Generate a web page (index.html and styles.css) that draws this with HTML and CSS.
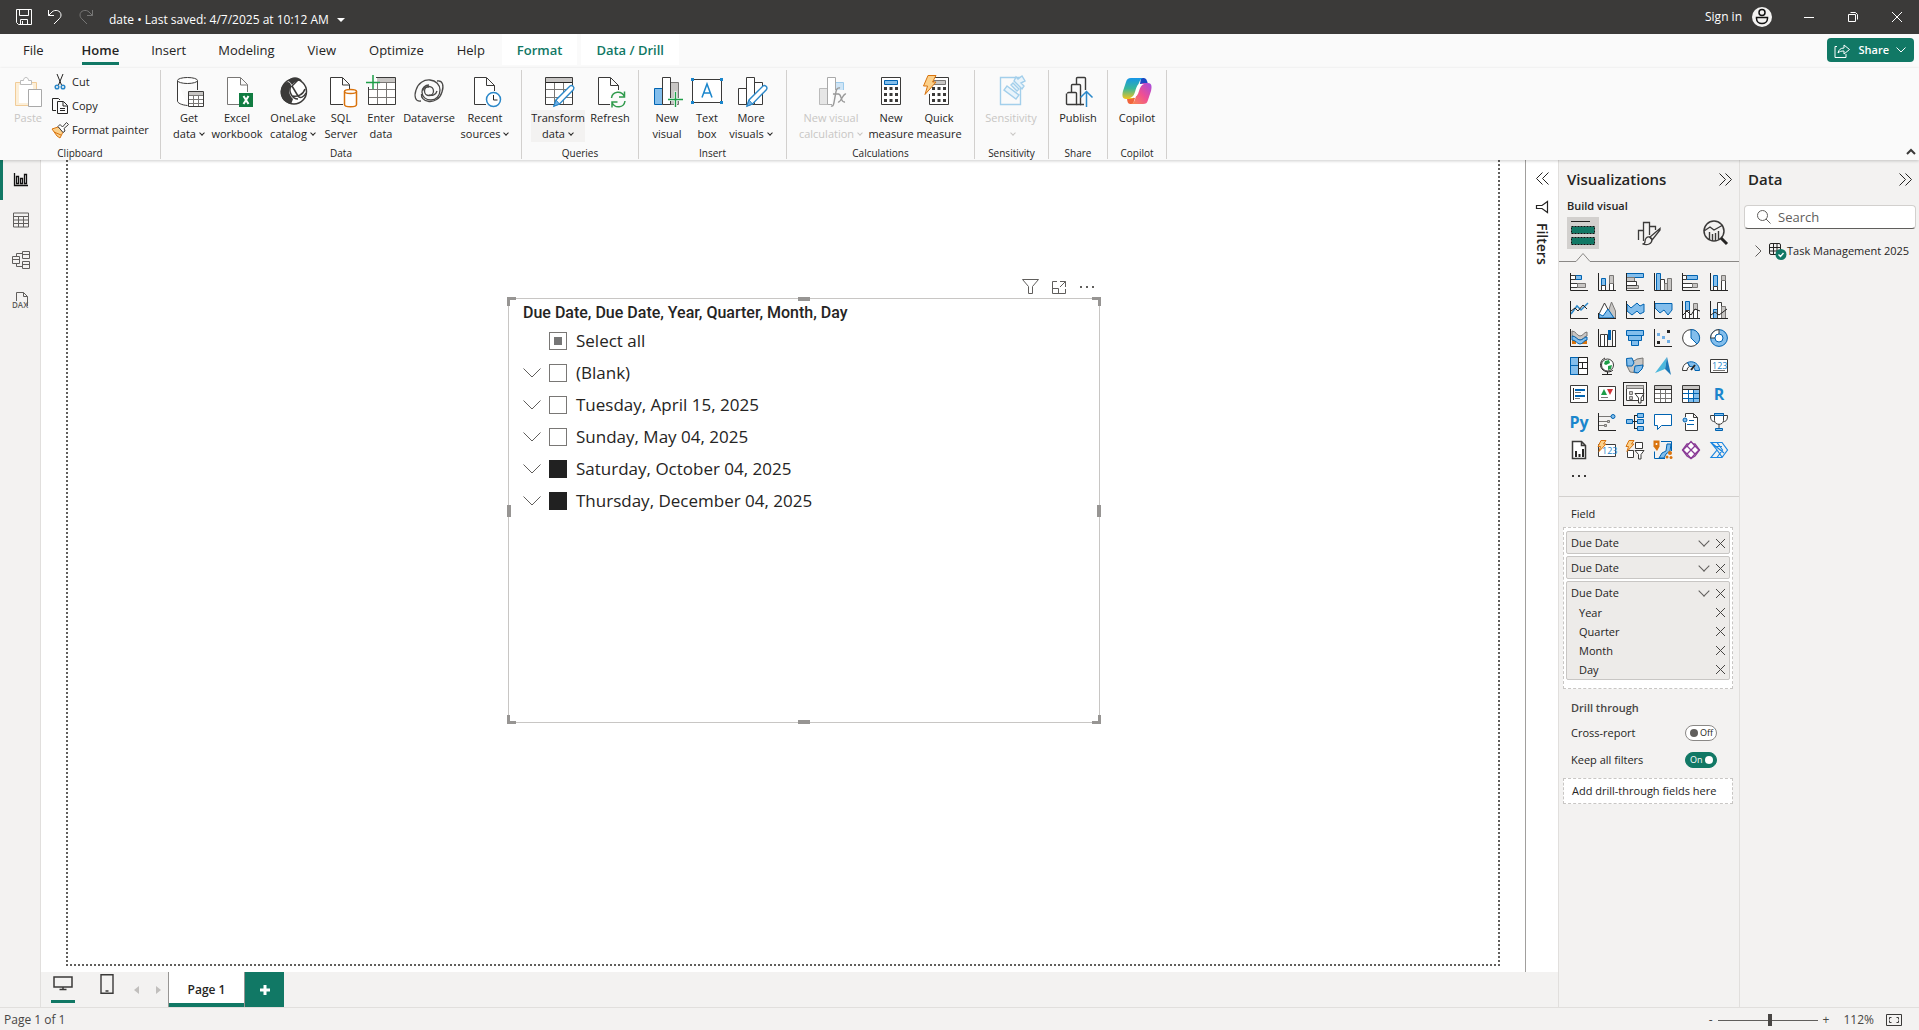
FILE: index.html
```html
<!DOCTYPE html>
<html lang="en">
<head>
    <meta charset="UTF-8">
    <meta name="viewport" content="width=device-width, initial-scale=1.0">
    <title>date - Power BI Desktop</title>
    <link rel="stylesheet" href="styles.css">
</head>
<body>

    <header class="titlebar">
        <button class="tb-btn" aria-label="Save"><svg width="16" height="16" viewBox="0 0 16 16"><path class="lw" d="M.5.5h15v15h-13l-2-2zM3.500.5v6h9v-6M4.500 15.500v-5h7v5M6.500 12v3"/></svg></button>
        <button class="tb-btn" aria-label="Undo"><svg width="16" height="16" viewBox="0 0 16 16"><path class="lw" d="M1.500 1v5.500H7M1.500 6.500L5 3c3-3 9-1.500 9 3 0 2-1 3-2 4l-5 5"/></svg></button>
        <button class="tb-btn dim" aria-label="Redo"><svg width="16" height="16" viewBox="0 0 16 16"><path class="lw" d="M14.500 1v5.500H9M14.500 6.500L11 3C8 0 2 1.500 2 6c0 2 1 3 2 4l5 5"/></svg></button>
        <button class="file-name">date • Last saved: 4/7/2025 at 10:12 AM <svg width="8" height="4" viewBox="0 0 8 4"><path fill="#fff" d="M0 0h8L4 4z"/></svg></button>
        <div class="window-side">
            <button class="sign-in">Sign in
                <svg width="20" height="20" viewBox="0 0 20 20"><circle cx="10" cy="10" r="10" fill="#f3f2f1"/><circle cx="10" cy="5.500" r="3" fill="none" stroke="#111" stroke-width="1.500"/><path d="M4.500 10.500h11v1c0 3-2.500 5-5.500 5s-5.500-2-5.500-5z" fill="none" stroke="#111" stroke-width="1.500"/></svg>
            </button>
            <button class="win-btn" aria-label="Minimize"><svg width="12" height="12" viewBox="0 0 12 12"><path class="lw" d="M1 6.500h10"/></svg></button>
            <button class="win-btn" aria-label="Restore"><svg width="12" height="12" viewBox="0 0 12 12"><path class="lw" d="M1.500 3.500h7v7h-7zM3.500 1.500h5l2 2v5"/></svg></button>
            <button class="win-btn" aria-label="Close"><svg width="12" height="12" viewBox="0 0 12 12"><path class="lw" d="M1 1l10 10M11 1L1 11"/></svg></button>
        </div>
    </header>

    <nav class="tabs">
        <a href="#" class="tab tab-file">File</a>
        <a href="#" class="tab active">Home</a>
        <a href="#" class="tab">Insert</a>
        <a href="#" class="tab">Modeling</a>
        <a href="#" class="tab">View</a>
        <a href="#" class="tab">Optimize</a>
        <a href="#" class="tab">Help</a>
        <a href="#" class="tab context">Format</a>
        <a href="#" class="tab context">Data / Drill</a>
        <button class="share"><svg width="17" height="15" viewBox="0 0 17 15"><path class="lw" d="M3 3.500H1v11h11V11M4 10c.5-3 2.500-5 6-5V2l5.500 4.500L10 11V8c-3 0-4.500.5-6 2z"/></svg>Share<svg width="10" height="6" viewBox="0 0 10 6"><path class="lw" d="M.5.5L5 5 9.500.5"/></svg></button>
    </nav>

    <section class="ribbon">
        <div class="group g-clip">
            <div class="tools">
                <button class="big disabled s">
                    <svg width="32" height="32" viewBox="0 0 32 32"><path d="M3.500 6.500h21v23h-21z" fill="#fcefd9" stroke="#f1cc98"/><path d="M7 9h14v18H7z" fill="#fff"/><path d="M8.500 8.500v-4h3c0-4 5-4 5 0h3v4z" fill="#fff" stroke="#bbb"/><path d="M16.500 13.500h13v17h-13z" fill="#fff" stroke="#a9a9a9"/></svg>
                    <span>Paste</span>
                </button>
                <div class="small-list">
                    <button class="small"><svg width="18" height="16" viewBox="0 0 18 16"><path class="lk" d="M6 0l4.500 11M12 0L7.500 11"/><circle class="lb" cx="6" cy="13" r="1.800"/><circle class="lb" cx="12" cy="13" r="1.800"/></svg>Cut</button>
                    <button class="small"><svg width="18" height="16" viewBox="0 0 18 16"><path class="lk" d="M5 12.500H1.500V.5h6L9 2M6.500 3.500h6l4 4v8h-10zM12 4v4h4M9 10.500h5M9 12.500h5"/></svg>Copy</button>
                    <button class="small"><svg width="18" height="16" viewBox="0 0 18 16"><path d="M1 7l6-2 5 5-3 6-3-2z" fill="#fbd08a" stroke="#d9730d"/><path d="M3 10l7 3" stroke="#d9730d"/><path d="M7 4.500l2-2 2.500 2.500L15.500.5l2 2L13 6.500 14 9l-2 1.500z" fill="#fff" stroke="#3b3a39"/></svg>Format painter</button>
                </div>
            </div>
            <div class="caption">Clipboard</div>
        </div>

        <div class="group g-data">
            <div class="tools">
                <button class="big s">
                    <svg width="32" height="32" viewBox="0 0 32 32"><path class="fk" d="M4.500 5v20c0 2 4 4 10 4.500M24.500 5v9"/><ellipse class="fk" cx="14.500" cy="4.500" rx="10" ry="3"/><path class="fk" d="M15.500 15.500h15v15h-15z"/><path d="M16 16h14v3H16z" fill="#c8c6c4"/><path class="lg" d="M16 19.500h14M16 23.500h14M16 27.500h14M20.500 19v11M25.500 19v11"/></svg>
                    <span>Get<br>data<i class="arr"></i></span>
                </button>
                <button class="big m">
                    <svg width="32" height="32" viewBox="0 0 32 32"><path d="M18 28.500H6.500v-27h13l7 7V16M19.500 2v7h7" fill="#fff" stroke="#797775"/><path d="M18 17h14v14H18z" fill="#107c41"/><path d="M22.500 20l5 8M27.500 20l-5 8" stroke="#fff" stroke-width="2"/></svg>
                    <span>Excel<br>workbook</span>
                </button>
                <button class="big m">
                    <svg width="32" height="32" viewBox="0 0 32 32"><circle cx="17" cy="15.500" r="12.500" fill="#fff" stroke="#3b3a39" stroke-width="1.500"/><path d="M11 5c3-5 11-5 14 0-4-1-8 1-10 4-1-2-2-3-4-4z" fill="#3b3a39"/><path d="M10 6c3 0 4 2 4 4-3 4-2 9 2 13-1 3-2 5-2 5C6 27 2 19 4 13c1-3 3-6 6-7z" fill="#3b3a39"/><path d="M14 10c-3 5 1 13 7 13M21 4l-6 6 6 10c2 3 6 1 8-3M16 20c4 1 10-1 12-7" fill="none" stroke="#3b3a39" stroke-width="1.500"/></svg>
                    <span>OneLake<br>catalog<i class="arr"></i></span>
                </button>
                <button class="big s">
                    <svg width="32" height="32" viewBox="0 0 32 32"><path class="fk" d="M18 28.500H5.500v-27h12l7 7V13M17.500 2v7h7"/><path d="M19.500 15.500v13c0 3 12 3 12 0v-13" fill="#fff" stroke="#d9730d" stroke-width="1.500"/><ellipse cx="25.500" cy="15.500" rx="6" ry="2" fill="#fff" stroke="#d9730d" stroke-width="1.500"/></svg>
                    <span>SQL<br>Server</span>
                </button>
                <button class="big s">
                    <svg width="32" height="32" viewBox="0 0 32 32"><path class="fk" d="M3.500 1.500h27v27h-27z"/><path d="M12 2h18v4H12z" fill="#c8c6c4"/><path class="lg" d="M4 13.500h26M4 21.500h26M12.500 6v22M21.500 6v22M12 6.500h18"/><path d="M0 0h11v11H0z" fill="#fafafa"/><path d="M8 -1v14M1 6.500h14" stroke="#1e9e48" stroke-width="1.500"/></svg>
                    <span>Enter<br>data</span>
                </button>
                <button class="big m">
                    <svg width="32" height="32" viewBox="0 0 32 32"><g fill="none" stroke="#4a4948" stroke-width="1.300"><circle cx="16" cy="15" r="4.500"/><path d="M8 25C2 26 1 20 3 14 5 7 11 3.500 17 4c6 .5 10 5 10 10 0 6-4 10-9 10-5 0-9-3-9-8 0-4 3-7 7-7"/><path d="M24 5c6-1 7 5 5 11-2 7-8 10-13 9.500C10 25 8 21 8.500 18"/><path d="M16 19c3 1 7 0 8-4M16 11c-4-1-6 2-6.500 4"/></g></svg>
                    <span>Dataverse</span>
                </button>
                <button class="big m">
                    <svg width="32" height="32" viewBox="0 0 32 32"><path class="fk" d="M17 28.500H5.500v-27h12l8 8V15M17.500 2v7.500h8"/><circle cx="24.500" cy="23.500" r="7" fill="#fff" stroke="#2b88c9" stroke-width="1.500"/><path class="lk" d="M24.500 19v5h4"/></svg>
                    <span>Recent<br>sources<i class="arr"></i></span>
                </button>
            </div>
            <div class="caption">Data</div>
        </div>

        <div class="group g-queries">
            <div class="tools">
                <button class="big m hovered">
                    <svg width="32" height="32" viewBox="0 0 32 32"><path class="fk" d="M3.500 1.500h27v27h-27z"/><path d="M4 2h26v4H4z" fill="#c8c6c4"/><path class="lg" d="M4 13.500h26M4 21.500h26M12.500 6v22M21.500 6v22"/><path class="lk" d="M4 6.500h26"/><path d="M12 30l2-6 14-14c2-1.500 5 1 3.500 3.500L17.500 28z" fill="#fff" stroke="#2b88c9" stroke-width="1.400"/><path d="M12 30l2-6 3.500 4z" fill="#71afe5" stroke="#2b88c9"/></svg>
                    <span>Transform<br>data<i class="arr"></i></span>
                </button>
                <button class="big n">
                    <svg width="32" height="32" viewBox="0 0 32 32"><path class="fk" d="M16 28.500H4.500v-27h12l8 8V14M16.500 2v7.500h8"/><path d="M17 16h15v15H17z" fill="#fafafa"/><path d="M17.500 22c1-7 10-8 13-1.500M30.500 15.500v5.500H25M31 25c-1 7-10 8-13 1.500M18 31.500V26h5.500" fill="none" stroke="#2f9a4b" stroke-width="1.500"/></svg>
                    <span>Refresh</span>
                </button>
            </div>
            <div class="caption">Queries</div>
        </div>

        <div class="group g-insert">
            <div class="tools">
                <button class="big s">
                    <svg width="32" height="32" viewBox="0 0 32 32"><path d="M3.500 12.500h8v16h-8z" fill="#83beec" stroke="#0063b1"/><path d="M19.500 6.500h8v22h-8z" fill="#c8c6c4" stroke="#797775"/><path class="fk" d="M11.500 1.500h8v27h-8z"/><path d="M24.500 15.500v15M17 23.500h15" stroke="#fafafa" stroke-width="3"/><path d="M24.500 16v15M17 23.500h15" stroke="#1e9e48" stroke-width="1.400"/></svg>
                    <span>New<br>visual</span>
                </button>
                <button class="big s">
                    <svg width="32" height="32" viewBox="0 0 32 32"><path class="fk" d="M1.500 3.500h29v23h-29z"/><path d="M0 2h3v3H0zM29 2h3v3h-3zM0 25h3v3H0zM29 25h3v3h-3z" fill="#1b86cc"/><path d="M11 21.500L16 8l5 13.500M12.500 17h7" fill="none" stroke="#1b86cc" stroke-width="1.500"/></svg>
                    <span>Text<br>box</span>
                </button>
                <button class="big n">
                    <svg width="32" height="32" viewBox="0 0 32 32"><path class="fk" d="M3.500 12.500h8v16h-8zM19.500 6.500h8v22h-8zM11.500 1.500h8v27h-8z"/><path d="M12 30l2-6 14-14c2-1.500 5 1 3.500 3.500L17.500 28z" fill="#fff" stroke="#2b88c9" stroke-width="1.400"/><path d="M12 30l2-6 3.500 4z" fill="#71afe5" stroke="#2b88c9"/></svg>
                    <span>More<br>visuals<i class="arr"></i></span>
                </button>
            </div>
            <div class="caption">Insert</div>
        </div>

        <div class="group g-calc">
            <div class="tools">
                <button class="big xl disabled">
                    <svg width="32" height="32" viewBox="0 0 32 32"><path d="M4.500 12.500h8v16h-8z" fill="#e6e6e6" stroke="#bbb"/><path d="M20.500 6.500h8v8h-8z" fill="#cfe5f6" stroke="#9ccbec"/><path d="M12.500 1.500h8v27h-8z" fill="#fff" stroke="#a9a9a9"/><path d="M17 14h15v17H17z" fill="#fafafa"/><path d="M25 12c-4-1-4 4-5 9s-1 10-4 9M18 18h6M23 18c4-1 2 9 7 8M31 18c-3-1-5 9-8 8" fill="none" stroke="#999" stroke-width="1.400"/></svg>
                    <span>New visual<br>calculation<i class="arr"></i></span>
                </button>
                <button class="big n">
                    <svg width="32" height="32" viewBox="0 0 32 32"><path class="fk" d="M6.500 1.500h19v27h-19z"/><path d="M9.500 4.500h13v4h-13z" fill="#83beec" stroke="#0063b1"/><path d="M10.500 11v17M16 11v17M21.500 11v17" stroke="#3b3a39" stroke-width="3" stroke-dasharray="3"/></svg>
                    <span>New<br>measure</span>
                </button>
                <button class="big n">
                    <svg width="32" height="32" viewBox="0 0 32 32"><path class="fk" d="M6.500 1.500h19v27h-19z"/><path d="M10.500 4.500h12v4h-12z" fill="#c8c6c4" stroke="#797775"/><path d="M10.500 11v17M16 11v17M21.500 11v17" stroke="#3b3a39" stroke-width="3" stroke-dasharray="3"/><path d="M0 0h8v18H0z" fill="#fafafa"/><path d="M5-.5h8L9.500 6H13L2 18.500 4.500 10H.5z" fill="#fbd08a" stroke="#d9730d"/></svg>
                    <span>Quick<br>measure</span>
                </button>
            </div>
            <div class="caption">Calculations</div>
        </div>

        <div class="group g-sens">
            <div class="tools">
                <button class="big m disabled">
                    <svg width="32" height="32" viewBox="0 0 32 32"><g fill="#e9f4fb" stroke="#a3cfeb" stroke-width="1.400"><path d="M5.500 1.500h20v27h-20z" fill="none"/><path d="M12 10l12 9-3 4L9 14z"/><path d="M16 9l6 6 2-2-6-6zM19 5l8 8 2-3-3-3 4-2-3-5-4 3-2-2z"/></g></svg>
                    <span>Sensitivity<br><i class="arr"></i></span>
                </button>
            </div>
            <div class="caption">Sensitivity</div>
        </div>

        <div class="group g-one">
            <div class="tools">
                <button class="big n">
                    <svg width="32" height="32" viewBox="0 0 32 32"><g fill="none" stroke="#3b3a39" stroke-width="1.400"><path d="M5.500 17.500q0-1 1-1h7q1 0 1 1v11h-9q-1 0-1-1v-10"/><path d="M9.500 16V9.500q0-1 1-1h7q1 0 1 1v19h-4"/><path d="M14.500 8V2.500q0-1 1-1h7q1 0 1 1V14M18 28.500h4"/></g><path d="M24.500 31V16M18.500 21.500l6-6 6 6" fill="none" stroke="#2b88c9" stroke-width="1.500"/></svg>
                    <span>Publish</span>
                </button>
            </div>
            <div class="caption">Share</div>
        </div>

        <div class="group g-one">
            <div class="tools">
                <button class="big n">
                    <svg width="32" height="32" viewBox="0 0 32 32">
                        <defs>
                            <linearGradient id="cpA" x1="0" y1="0" x2="0" y2="1"><stop offset="0" stop-color="#1696e8"/><stop offset=".5" stop-color="#38b79a"/><stop offset="1" stop-color="#f5c31c"/></linearGradient>
                            <linearGradient id="cpB" x1="1" y1="0" x2="0" y2="1"><stop offset="0" stop-color="#a34be0"/><stop offset=".5" stop-color="#ef4f93"/><stop offset="1" stop-color="#fb8d4a"/></linearGradient>
                        </defs>
                        <path d="M20 2h3c2 0 3 2 4 6h-8z" fill="#1a49c4"/>
                        <path d="M12 28H9c-2 0-3-3-3-6h8z" fill="#f0643c"/>
                        <path d="M10 2h12c-3 1-4 4-5 8l-3 9c-1 3-2 4-5 4H5c-4 0-4-4-3-8l3-9c1-3 2-4 5-4z" fill="url(#cpA)"/>
                        <path d="M22 28H10c3-1 4-4 5-8l3-9c1-3 2-4 5-4h4c4 0 4 4 3 8l-3 9c-1 3-2 4-5 4z" fill="url(#cpB)"/>
                        <path d="M18 8h5c-3 1-4 4-5 7-1 4-3 6-6 7h-3c3-1 4-3 5-6 1-4 2-7 4-8z" fill="#fff"/>
                    </svg>
                    <span>Copilot</span>
                </button>
            </div>
            <div class="caption">Copilot</div>
        </div>
        <button class="collapse" aria-label="Collapse ribbon"><svg width="10" height="6" viewBox="0 0 10 6"><path d="M1 5l4-4 4 4" fill="none" stroke="#3b3a39" stroke-width="2"/></svg></button>
    </section>

    <div class="workspace">
        <nav class="rail">
            <button class="rail-btn current" aria-label="Report view"><svg width="16" height="16" viewBox="0 0 16 16"><path d="M1.500 1v12.500H15M3.500 4.500h2v7h-2zM7.500 6.500h2v5h-2zM11.500 2.500h2v9h-2z" fill="none" stroke="#111" stroke-width="1.300"/></svg></button>
            <button class="rail-btn" aria-label="Table view"><svg width="16" height="16" viewBox="0 0 16 16"><path class="ls" d="M.5 1h15v14H.5zM.5 4.500h15M.5 8h15M.5 11.500h15M5.500 4.500V15M10.500 4.500V15"/></svg></button>
            <button class="rail-btn" aria-label="Model view"><svg width="18" height="18" viewBox="0 0 18 18"><path class="ls" d="M.5 5.500h7v7h-7zM.5 8.500h7M10.500.5h7v7h-7zM10.500 3.500h7M10.500 10.500h7v7h-7zM10.500 13.500h7M4.500 5.500v-3h6M4.500 12.500v3h6"/></svg></button>
            <button class="rail-btn" aria-label="DAX query view"><svg width="18" height="18" viewBox="0 0 18 18"><path class="ls" d="M4.500 10V1.500h7l4 4V15M11.500 1.500v4h4"/><text x="0" y="17" class="dax">DAX</text></svg></button>
        </nav>

        <div class="center">
            <div class="report">
                <main class="canvas">
                    <div class="page">
                        <div class="slicer">
                            <div class="slicer-tools">
                                <button aria-label="Filters"><svg width="17" height="17" viewBox="0 0 17 17"><path class="ls" d="M.5 1.500h16l-6 7v7h-4v-7z"/></svg></button>
                                <button aria-label="Focus mode"><svg width="16" height="16" viewBox="0 0 16 16"><path class="ls" d="M6 2.500H1.500v12h13V10M9 2.500h5.500V8M14.500 2.500L9 8M1.500 9.500h6v5"/></svg></button>
                                <button aria-label="More options"><svg width="16" height="16" viewBox="0 0 16 16"><path fill="#605e5c" d="M1 7h2v2H1zM7 7h2v2H7zM13 7h2v2h-2z"/></svg></button>
                            </div>
                            <span class="handle tl"></span><span class="handle t"></span><span class="handle tr"></span>
                            <span class="handle l"></span><span class="handle r"></span>
                            <span class="handle bl"></span><span class="handle bm"></span><span class="handle br"></span>
                            <h3>Due Date, Due Date, Year, Quarter, Month, Day</h3>
                            <ul>
                                <li><span class="exp"></span><input type="checkbox" id="all" class="partial"><label for="all">Select all</label></li>
                                <li><span class="exp"><svg width="18" height="10" viewBox="0 0 18 10"><path class="ls" d="M.5.5L9 9 17.500.5"/></svg></span><input type="checkbox" id="d0"><label for="d0">(Blank)</label></li>
                                <li><span class="exp"><svg width="18" height="10" viewBox="0 0 18 10"><path class="ls" d="M.5.5L9 9 17.500.5"/></svg></span><input type="checkbox" id="d1"><label for="d1">Tuesday, April 15, 2025</label></li>
                                <li><span class="exp"><svg width="18" height="10" viewBox="0 0 18 10"><path class="ls" d="M.5.5L9 9 17.500.5"/></svg></span><input type="checkbox" id="d2"><label for="d2">Sunday, May 04, 2025</label></li>
                                <li><span class="exp"><svg width="18" height="10" viewBox="0 0 18 10"><path class="ls" d="M.5.5L9 9 17.500.5"/></svg></span><input type="checkbox" id="d3" checked><label for="d3">Saturday, October 04, 2025</label></li>
                                <li><span class="exp"><svg width="18" height="10" viewBox="0 0 18 10"><path class="ls" d="M.5.5L9 9 17.500.5"/></svg></span><input type="checkbox" id="d4" checked><label for="d4">Thursday, December 04, 2025</label></li>
                            </ul>
                        </div>
                    </div>
                </main>
                <aside class="filters">
                    <button aria-label="Expand filters"><svg width="13" height="13" viewBox="0 0 13 13"><path class="lk" d="M6.500.5l-6 6 6 6M12.500.5l-6 6 6 6"/></svg></button>
                    <svg width="12" height="12" viewBox="0 0 12 12"><path d="M11.500.5v11L6 7.500H.5v-3H6z" fill="none" stroke="#252423" stroke-width="1.200"/></svg>
                    <span>Filters</span>
                </aside>
            </div>
            <footer class="pages">
                <button class="view-btn on" aria-label="Desktop layout"><svg width="20" height="20" viewBox="0 0 20 20"><path d="M1 3h18v10H1zM10 13v3M6.500 15.500h7" fill="none" stroke="#3b3a39" stroke-width="1.500"/></svg></button>
                <button class="view-btn" aria-label="Mobile layout"><svg width="20" height="20" viewBox="0 0 20 20"><path d="M4 .7h12v18.600H4zM8.500 17h3" fill="none" stroke="#3b3a39" stroke-width="1.400"/></svg></button>
                <button class="nav-btn" aria-label="Previous page"><svg width="5" height="8" viewBox="0 0 5 8"><path fill="#c1bfbd" d="M5 0v8L0 4z"/></svg></button>
                <button class="nav-btn" aria-label="Next page"><svg width="5" height="8" viewBox="0 0 5 8"><path fill="#c1bfbd" d="M0 0v8l5-4z"/></svg></button>
                <button class="page-tab">Page 1</button>
                <button class="page-add" aria-label="New page"><svg width="12" height="12" viewBox="0 0 12 12"><path d="M6 1v10M1 6h10" stroke="#fff" stroke-width="3"/></svg></button>
            </footer>
        </div>

        <aside class="panel viz">
            <div class="panel-head">
                <h2>Visualizations</h2>
                <button aria-label="Collapse"><svg width="13" height="13" viewBox="0 0 13 13"><path class="lk" d="M.5.5l6 6-6 6M6.500.5l6 6-6 6"/></svg></button>
            </div>
            <h4>Build visual</h4>
            <div class="modes">
                <button class="mode sel" aria-label="Build visual"><svg width="32" height="32" viewBox="0 0 32 32"><path d="M4 4.500h19" stroke="#252423"/><path d="M4.500 9.500h23v7h-23zM4.500 20.500h23v7h-23z" fill="#117865" stroke="#111" stroke-dasharray="2 1"/></svg></button>
                <button class="mode" aria-label="Format visual"><svg width="32" height="32" viewBox="0 0 32 32"><g fill="none" stroke="#3b3a39" stroke-width="1.300"><path d="M5.500 23V13.500h5V24M10.500 22V5.500h6V18M16.500 9.500h6V13"/><path d="M27 11.500L17 20l2.500 2.500L27 13z"/><path d="M16.500 20c-3-.5-4.500 2-4.500 4.500 0 2-1.500 2.500-2.500 2.500 5 1.500 9.500 0 9.500-4.500z"/></g></svg></button>
                <button class="mode" aria-label="Analytics"><svg width="32" height="32" viewBox="0 0 32 32"><circle cx="15" cy="14" r="10" fill="none" stroke="#3b3a39" stroke-width="1.500"/><path d="M5 14l6-4 4 3 9-5M10.500 23V15M13.500 24v-7M16.500 24v-8M19.500 22V14" fill="none" stroke="#3b3a39" stroke-width="1.400"/><path d="M22 21l6 6" stroke="#252423" stroke-width="3"/></svg></button>
            </div>
            <svg class="notch" width="180" height="9" viewBox="0 0 180 9"><path d="M0 8.500h17l7-8 7 8h149" fill="none" stroke="#8a8886"/></svg>

            <div class="gallery">
                <button aria-label="Stacked bar chart"><svg viewBox="0 0 18 18"><path class="b" d="M.5 2.500h11v4H.500z"/><path class="w" d="M.5 2.500h5v4h-5zM.5 10.500h7v4h-7z"/><path class="g" d="M7.500 10.500h8v4h-8z"/><path class="lk" d="M.5 0v17.500H18"/></svg></button>
                <button aria-label="Stacked column chart"><svg viewBox="0 0 18 18"><path class="b" d="M3.500 5.500h4v8h-4z"/><path class="w" d="M3.500 12.500h4v5h-4zM11.500 9.500h4v8h-4z"/><path class="g" d="M11.500 2.500h4v8h-4z"/><path class="lk" d="M.5 0v17.500H18"/></svg></button>
                <button aria-label="Clustered bar chart"><svg viewBox="0 0 18 18"><path class="b" d="M.5 .500h17v4H.500z"/><path class="g" d="M.5 4.500h8v4h-8zM.5 12.500h12v3h-12z"/><path class="w" d="M.5 8.500h10v4h-10z"/><path class="lk" d="M.5 0v17.500H18"/></svg></button>
                <button aria-label="Clustered column chart"><svg viewBox="0 0 18 18"><path class="b" d="M2.500 .500h4v17h-4z"/><path class="w" d="M6.500 6.500h4v11h-4z"/><path class="g" d="M10.500 10.500h3v7h-3zM13.500 5.500h4v12h-4z"/><path class="lk" d="M.5 0v17.500H18"/></svg></button>
                <button aria-label="100% stacked bar chart"><svg viewBox="0 0 18 18"><path class="b" d="M4.500 2.500h11v4h-11z"/><path class="w" d="M.5 2.500h4v4h-4zM.5 10.500h10v4h-10z"/><path class="g" d="M10.500 10.500h5v4h-5z"/><path class="lk" d="M.5 0v17.500H18"/></svg></button>
                <button aria-label="100% stacked column chart"><svg viewBox="0 0 18 18"><path class="b" d="M3.500 2.500h4v11h-4z"/><path class="w" d="M3.500 13.500h4v4h-4zM11.500 7.500h4v10h-4z"/><path class="g" d="M11.500 2.500h4v5h-4z"/><path class="lk" d="M.5 0v17.500H18"/></svg></button>

                <button aria-label="Line chart"><svg viewBox="0 0 18 18"><path class="lb" d="M1 13l6-8 4 4 7-7"/><path class="lk" d="M1 10l4-3 3 3 5-6 4 4M.5 0v17.500H18"/></svg></button>
                <button aria-label="Area chart"><svg viewBox="0 0 18 18"><path class="g" d="M8 17L13.500 1l4 9v7z"/><path class="w" d="M1 13L6.500 2l8 15H1z"/><path class="b" d="M1 17v-4l4 2 5-7 6 9z"/><path class="lk" d="M.5 12v5.500H18"/></svg></button>
                <button aria-label="Stacked area chart"><svg viewBox="0 0 18 18"><path class="b" d="M1 3l4 4 6-5 3 3 4-2v8l-4 2-3-3-5 4-5-4z"/><path class="lk" d="M.5 0v17.500H18"/></svg></button>
                <button aria-label="100% stacked area chart"><svg viewBox="0 0 18 18"><path class="b" d="M1 2.500h17V9l-4 5-4-5-4 3-5-5z"/><path class="lk" d="M.5 0v17.500H18"/></svg></button>
                <button aria-label="Line and stacked column"><svg viewBox="0 0 18 18"><path class="b" d="M3.500 .500h4v9h-4z"/><path class="w" d="M3.500 9.500h4v8h-4zM11.500 8.500h4v9h-4z"/><path class="g" d="M11.500 2.500h4v6h-4z"/><path class="lk" d="M.5 0v17.500H18M1 14l4-4 4 4 4-6 5 2"/></svg></button>
                <button aria-label="Line and clustered column"><svg viewBox="0 0 18 18"><path class="b" d="M3.500 8.500h4v9h-4z"/><path class="w" d="M7.500 1.500h4v16h-4z"/><path class="g" d="M11.500 5.500h4v12h-4z"/><path class="lk" d="M.5 0v17.500H18M1 14l4-3 4 3 8-6"/></svg></button>

                <button aria-label="Ribbon chart"><svg viewBox="0 0 18 18"><path d="M2 10h4v5H2zM12 10h5v5h-5z" fill="#d9730d"/><path class="g" d="M2 2c4 0 5 5 8 5s4-4 7-4v4c-3 0-4 4-7 4S6 7 2 7z"/><path class="b" d="M2 7c4 0 5 4 8 4s4-3 7-3v3c-3 0-4 4-7 4s-4-4-8-4z"/><path class="lk" d="M.5 0v17.500H18"/></svg></button>
                <button aria-label="Waterfall chart"><svg viewBox="0 0 18 18"><path class="w" d="M2.500 5.500h4v12h-4zM6.500 5.500h3v12h-3zM14.500 1.500h3v16h-3z"/><path d="M10 1h3v10h-3z" fill="#0063b1"/><path class="lk" d="M.5 0v17.500H18"/></svg></button>
                <button aria-label="Funnel"><svg viewBox="0 0 18 18"><path class="b" d="M.500 1.500h17v5H.500zM2.500 6.500h13v5h-13zM5.500 11.500h7v5h-7z"/></svg></button>
                <button aria-label="Scatter chart"><svg viewBox="0 0 18 18"><path fill="#71afe5" d="M3 4h3v3H3zM8 7h3v3H8zM13 11h3v3h-3z"/><path fill="#252423" d="M13 1h3v3h-3zM3 12h3v3H3z"/><path class="lk" d="M.5 0v17.500H18"/></svg></button>
                <button aria-label="Pie chart"><svg viewBox="0 0 18 18"><circle class="w" cx="9" cy="9" r="8.400"/><path class="b" d="M9 .6v8.400l6 6A8.400 8.400 0 0 0 9 .6z"/></svg></button>
                <button aria-label="Donut chart"><svg viewBox="0 0 18 18"><circle class="b" cx="9" cy="9" r="8.400"/><path class="w" d="M9 .6A8.400 8.400 0 0 0 .6 9H5a4 4 0 0 1 4-4z"/><circle cx="9" cy="9" r="4" fill="#fff" stroke="#0063b1"/></svg></button>

                <button aria-label="Treemap"><svg viewBox="0 0 18 18"><path class="w" d="M.500 .500h17v17H.500z"/><path class="b" d="M.500 .500h8v17h-8zM.500 8.500h8"/><path class="lk" d="M8.500 5.500h9M12.500 5.500v6M8.500 11.500h9M8.500 17.500v-17h9v17z"/></svg></button>
                <button aria-label="Map"><svg viewBox="0 0 18 18"><circle class="w" cx="9.500" cy="8" r="6"/><path d="M7 4l4-1 1 3-4 2-2-1zM10 9l4-1-1 4-3 1z" fill="#1e9e48"/><path class="lk" d="M7 1C2 3 1 10 5 13s8 2 10 0M9.500 14.500v3M4 17.500h10"/></svg></button>
                <button aria-label="Filled map"><svg viewBox="0 0 18 18"><path class="g" d="M1 2l7 2 3-2 6-1v9l-6 6-7-1-3-6z"/><path class="b" d="M.5 1.500L6 1l2 5-2 3-5 0zM9 9l8-1-1 4-4 4-4-1z"/></svg></button>
                <button aria-label="Azure map"><svg viewBox="0 0 18 18"><path d="M13 0L1 16l10-4z" fill="#4bb8dd"/><path d="M13 0l4 18-6-6z" fill="#1b78b8"/></svg></button>
                <button aria-label="Gauge"><svg viewBox="0 0 18 18"><path class="w" d="M.5 13.500a8.500 8.500 0 0 1 5-8l2 4a4 4 0 0 0-2.500 4z"/><path class="b" d="M5.500 5.500a8.500 8.500 0 0 1 12 8h-4.500a4 4 0 0 0-5-4z"/><path d="M9 13l4-5" stroke="#252423" stroke-width="2"/></svg></button>
                <button aria-label="Card"><svg viewBox="0 0 18 18"><path class="w" d="M.500 2.500h17v13H.500z"/><text class="num" x="2" y="12">123</text><path class="lg" d="M3 13.500h12"/></svg></button>

                <button aria-label="Multi-row card"><svg viewBox="0 0 18 18"><path class="w" d="M.500 .500h17v17H.500z"/><path class="lk" d="M3.500 3v12"/><path class="lg" d="M5 7.500h6M5 13.500h5"/><path d="M5 5h10M5 11h10" stroke="#0063b1" stroke-width="2"/></svg></button>
                <button aria-label="KPI"><svg viewBox="0 0 18 18"><path class="w" d="M.500 1.500h17v14H.500z"/><path d="M3 10l3-6 3 6z" fill="#1e9e48"/><path d="M9 4h6l-3 6z" fill="#d13438"/><path class="lg" d="M3 12.500h7"/></svg></button>
                <button class="picked" aria-label="Slicer"><svg viewBox="0 0 18 18"><path class="w" d="M.500 .500h17v15H.500z"/><path class="g" d="M.500 .500h17v3H.500zM3.500 6.500h3v3h-3zM3.500 11.500h3v3h-3z"/><path class="w" d="M9 8.500h9l-3 4.500v5h-2.500v-5z"/></svg></button>
                <button aria-label="Table"><svg viewBox="0 0 18 18"><path class="w" d="M.500 .500h17v17H.500z"/><path class="lg" d="M6.500 4v13M11.500 4v13M1 8.500h16M1 13.500h16"/><path d="M1 1h16v3H1z" fill="#c8c6c4"/><path class="lk" d="M.5 4.500h17"/></svg></button>
                <button aria-label="Matrix"><svg viewBox="0 0 18 18"><path class="w" d="M.500 .500h17v17H.500z"/><path d="M11 4h6v13H6v-4h5z" fill="#83beec"/><path d="M1 1h16v3H1z" fill="#c8c6c4"/><path d="M6.500 4v13M11.500 4v13M1 8.500h16M1 13.500h16" stroke="#0063b1"/><path class="lk" d="M.5 4.500h17"/></svg></button>
                <button class="script" aria-label="R script visual">R</button>

                <button class="script" aria-label="Python visual">Py</button>
                <button aria-label="Key influencers"><svg viewBox="0 0 18 18"><path class="lg" d="M1 3.500h12M1 8.500h8M1 12.500h5"/><circle class="b" cx="15" cy="3.500" r="2"/><path class="g" d="M9.500 7.500h2v2h-2zM6.500 11.500h2v2h-2z"/><path class="lk" d="M.5 0v17.500H18"/></svg></button>
                <button aria-label="Decomposition tree"><svg viewBox="0 0 18 18"><path class="lk" d="M6 8.500h5M8.500 2.500v13M8 2.500h3M8 15.500h3"/><path class="b" d="M.500 6.500h6v4h-6zM11.500 .500h6v4h-6zM11.500 6.500h6v4h-6zM11.500 13.500h6v4h-6z"/></svg></button>
                <button aria-label="Q&amp;A"><svg viewBox="0 0 18 18"><path d="M.500 1.500h17v11h-10l-4 4v-4h-3z" fill="#fff" stroke="#0063b1"/></svg></button>
                <button aria-label="Smart narrative"><svg viewBox="0 0 18 18"><path class="w" d="M3.500 4V.500h8l4 4v13h-12V10M11.500 .500v4h4"/><circle class="b" cx="3" cy="7" r="2"/><path d="M7 7.500h5M5 11.500h7" stroke="#0063b1"/></svg></button>
                <button aria-label="Metrics"><svg viewBox="0 0 18 18"><path class="w" d="M4.500 .500h9v7c0 5-9 5-9 0zM4 2.500H.500c0 4 1 6 4 6M14 2.500h3.500c0 4-1 6-4 6M9 11v5"/><path class="b" d="M4.500 .500h9v2h-9zM5.500 15.500h7v2h-7z"/></svg></button>

                <button aria-label="Paginated report"><svg viewBox="0 0 18 18"><path d="M2.500 .500h9l4 4v13h-13zM11.500 .500v4h4" fill="#fff" stroke="#3b3a39" stroke-width="1.500"/><path d="M5 10h2v6H5zM8.500 13h2v3h-2zM12 8h2v8h-2z" fill="#252423"/></svg></button>
                <button aria-label="Card (new)"><svg viewBox="0 0 18 18"><path class="w" d="M.500 3.500h17v12H.500z"/><text class="num" x="4" y="13">123</text><path d="M3-.5h5L5.500 3H8L1 10.500 2.500 5.500H0z" fill="#fbd08a" stroke="#d9730d"/></svg></button>
                <button aria-label="Slicer (new)"><svg viewBox="0 0 18 18"><path class="w" d="M9.500 1.500h7v6h-7zM1.500 9.500h6v7h-6z"/><path class="w" d="M9 9.500h9l-3 4v4.500h-2.500v-4.500z"/><path d="M3-.5h5L5.500 3H8L1 10.500 2.500 5.500H0z" fill="#fbd08a" stroke="#d9730d"/></svg></button>
                <button aria-label="ArcGIS Maps"><svg viewBox="0 0 18 18"><path d="M7 .500h10.500V10M11 17.500H.500v-7" fill="none" stroke="#0063b1"/><path d="M5 17l3-5 4-2 1-7h4l-1 7-4 3-2 4z" fill="#83beec" stroke="#0063b1"/><path d="M-.5-.5h6v6L3 10-.5 5.500z" fill="#d9730d"/><circle cx="2.500" cy="3" r="1" fill="#fff"/><circle cx="16" cy="12" r="2" fill="#d9730d"/><circle cx="13" cy="16" r="1.500" fill="#d9730d"/><circle cx="17" cy="16.500" r="1.500" fill="#d9730d"/></svg></button>
                <button aria-label="Power Apps"><svg viewBox="0 0 18 18"><g fill="#fff" stroke="#8a3b96" stroke-width="1.300"><path d="M5 3h8l4.500 6-4.500 6-4 2.500L5 15 .500 9z"/><path d="M9 .500L13 5 9 9 5 5zM5 5l4 4-4 4-4-4zM13 5l4 4-4 4-4-4zM9 9l4 4-4 4.500L5 13z"/></g></svg></button>
                <button aria-label="Power Automate"><svg viewBox="0 0 18 18"><path d="M1 1.500h11l5.500 7.500-5.500 7.500H1L7 9zM7 1.500L12.500 9 7 16.500M4 5.500l8 0M1 1.500L14 12M7 9l5 7" fill="none" stroke="#1b86e0" stroke-width="1.200"/></svg></button>
            </div>
            <button class="more" aria-label="Get more visuals"><svg width="16" height="4" viewBox="0 0 16 4"><path fill="#3b3a39" d="M1 1h2v2H1zM7 1h2v2H7zM13 1h2v2h-2z"/></svg></button>

            <div class="fields">
                <div class="label">Field</div>
                <div class="well">
                    <div class="pill"><div class="pill-row"><span>Due Date</span><button class="dn" aria-label="Options"></button><button class="x" aria-label="Remove"></button></div></div>
                    <div class="pill"><div class="pill-row"><span>Due Date</span><button class="dn" aria-label="Options"></button><button class="x" aria-label="Remove"></button></div></div>
                    <div class="pill">
                        <div class="pill-row"><span>Due Date</span><button class="dn" aria-label="Options"></button><button class="x" aria-label="Remove"></button></div>
                        <div class="pill-row sub"><span>Year</span><button class="x" aria-label="Remove"></button></div>
                        <div class="pill-row sub"><span>Quarter</span><button class="x" aria-label="Remove"></button></div>
                        <div class="pill-row sub"><span>Month</span><button class="x" aria-label="Remove"></button></div>
                        <div class="pill-row sub"><span>Day</span><button class="x" aria-label="Remove"></button></div>
                    </div>
                </div>
                <div class="label strong">Drill through</div>
                <label class="toggle-row">Cross-report <input type="checkbox"><span class="toggle">Off</span></label>
                <label class="toggle-row">Keep all filters <input type="checkbox" checked><span class="toggle">On</span></label>
                <div class="drop">Add drill-through fields here</div>
            </div>
        </aside>

        <aside class="panel data">
            <div class="panel-head">
                <h2>Data</h2>
                <button aria-label="Collapse"><svg width="13" height="13" viewBox="0 0 13 13"><path class="lk" d="M.5.5l6 6-6 6M6.500.5l6 6-6 6"/></svg></button>
            </div>
            <label class="search">
                <svg width="14" height="14" viewBox="0 0 14 14"><circle class="ls" cx="5.500" cy="5.500" r="5"/><path class="ls" d="M9 9l4.500 4.500"/></svg>
                <input type="text" placeholder="Search" aria-label="Search">
            </label>
            <button class="tree">
                <svg width="7" height="12" viewBox="0 0 7 12"><path class="ls" d="M.5.5L6 6 .5 11.500"/></svg>
                <svg width="18" height="18" viewBox="0 0 18 18"><path class="lk" d="M2 1.500h8q1.500 0 1.500 1.500v8q0 1.500-1.500 1.500H2Q.500 12.500.500 11V3Q.500 1.500 2 1.500zM.5 5.500h11M.5 9h11M4.500 1.500v11M8 1.500v11"/><circle cx="12" cy="12.500" r="5.500" fill="#117865"/><path d="M9.500 12.500l2 2 3-3.500" fill="none" stroke="#fff" stroke-width="1.400"/></svg>
                Task Management 2025
            </button>
        </aside>
    </div>

    <div class="status">
        <span>Page 1 of 1</span>
        <div class="zoom">
            <button aria-label="Zoom out">-</button>
            <input type="range" min="10" max="212" value="115" aria-label="Zoom">
            <button aria-label="Zoom in">+</button>
            <span>112%</span>
            <button aria-label="Fit to page"><svg width="16" height="12" viewBox="0 0 16 12"><path d="M.5.5h15v11H.5zM5.500 3.500h-2v2M10.500 3.500h2v2M5.500 8.500h-2v-2M10.500 8.500h2v-2" fill="none" stroke="#3b3a39"/></svg></button>
        </div>
    </div>

</body>
</html>
```
FILE: styles.css
```css
* {
    box-sizing: border-box;
}
body {
    margin: 0;
    height: 100vh;
    display: flex;
    flex-direction: column;
    overflow: hidden;
    font-family: "Segoe UI", "Open Sans", "Noto Sans", sans-serif;
    font-size: 12px;
    line-height: 16px;
    color: #252423;
    background: #f3f2f1;
}
button {
    font: inherit;
    color: inherit;
    background: none;
    border: none;
    padding: 0;
    cursor: pointer;
}
h2, h3, h4, ul {
    margin: 0;
    padding: 0;
}
svg {
    display: block;
    flex: none;
    overflow: visible;
}

/* icon strokes */
.lw { fill: none; stroke: #fff; }
.lk { fill: none; stroke: #252423; }
.fk { fill: #fff; stroke: #3b3a39; }
.lg { fill: none; stroke: #797775; }
.ls { fill: none; stroke: #605e5c; }
.lb { fill: none; stroke: #2b88c9; stroke-width: 1.5; }
.b { fill: #83beec; stroke: #0063b1; }
.g { fill: #c8c6c4; stroke: #797775; }
.w { fill: #fff; stroke: #3b3a39; }
.num { font-size: 9px; fill: #1b86cc; }
.dax { font-size: 8px; font-weight: 600; fill: #605e5c; }

/* title bar */
.titlebar {
    flex: none;
    height: 34px;
    display: flex;
    align-items: center;
    padding-left: 16px;
    background: #3b3a39;
    color: #fff;
}
.tb-btn {
    width: 16px;
    margin-right: 15px;
}
.tb-btn.dim {
    opacity: 0.3;
}
.file-name {
    display: flex;
    align-items: center;
    gap: 8px;
    padding-top: 5px;
}
.window-side {
    margin-left: auto;
    display: flex;
    align-items: center;
}
.sign-in {
    display: flex;
    align-items: center;
    gap: 10px;
    margin-right: 15px;
}
.win-btn {
    width: 44px;
    height: 34px;
    display: flex;
    justify-content: center;
    align-items: center;
}

/* ribbon tabs */
.tabs {
    flex: none;
    display: flex;
    height: 34px;
    padding-right: 5px;
    background: #fafafa;
    font-size: 13px;
}
.tab {
    height: 31px;
    padding: 8px 0 0;
    margin: 0 16px;
    color: #252423;
    text-decoration: none;
}
.tab:nth-child(n+4):nth-child(-n+7) {
    margin: 0 17px 0 16px;
}
.tab-file {
    margin: 0 22px 0 23px;
}
.tab.active {
    font-weight: 600;
    border-bottom: 3px solid #117865;
}
.tab.context {
    margin: 0 4px 0 0;
    padding: 8px 15px 0;
    font-weight: 600;
    color: #117865;
    background: #fff;
}
.share {
    display: flex;
    align-items: center;
    gap: 7px;
    margin: 4px 0 0 auto;
    height: 24px;
    padding: 0 8px 0 7px;
    border-radius: 4px;
    font-size: 11px;
    font-weight: 600;
    color: #fff;
    background: #117865;
}

/* ribbon */
.ribbon {
    flex: none;
    display: flex;
    height: 92px;
    padding: 2px 0 1px;
    background: #fafafa;
    box-shadow: 0 1px 3px rgba(0, 0, 0, 0.2);
    position: relative;
    z-index: 1;
}
.group {
    display: flex;
    flex-direction: column;
    justify-content: space-between;
    border-right: 1px solid #d2d0ce;
}
.g-clip { width: 161px; }
.g-data { width: 361px; }
.g-queries { width: 117px; }
.g-insert { width: 148px; }
.g-calc { width: 188px; }
.g-sens { width: 74px; }
.g-one { width: 59px; }
.tools {
    display: flex;
    padding-left: 8px;
}
.g-one .tools {
    padding-left: 5px;
}
.caption {
    font-size: 10px;
    line-height: 12px;
    text-align: center;
}
.big {
    display: flex;
    flex-direction: column;
    align-items: center;
    gap: 2px;
    padding-top: 6px;
    white-space: nowrap;
    font-size: 11px;
}
.big.s { width: 40px; }
.big.n { width: 48px; }
.big.m { width: 56px; }
.big.xl { width: 72px; }
.hovered span {
    background: #f3f2f1;
}
.disabled {
    color: #c8c6c4;
}
.arr {
    display: inline-block;
    width: 4px;
    height: 4px;
    margin: 0 1px 3px 4px;
    border: solid currentColor;
    border-width: 0 1px 1px 0;
    transform: rotate(45deg);
}
.small-list {
    display: flex;
    flex-direction: column;
    flex: 1;
    padding-left: 3px;
}
.small {
    display: flex;
    align-items: center;
    gap: 3px;
    height: 24px;
    white-space: nowrap;
    font-size: 11px;
}
.collapse {
    margin: auto 3px 4px auto;
}

/* work area */
.workspace {
    flex: 1;
    display: flex;
    min-height: 0;
}
.rail {
    width: 41px;
    border-right: 1px solid #e1dfdd;
}
.rail-btn {
    display: flex;
    align-items: center;
    justify-content: center;
    width: 100%;
    height: 40px;
    padding-left: 2px;
}
.rail-btn.current {
    border-left: 3px solid #117865;
    padding: 0 2px 0 0;
}
.center {
    flex: 1;
    display: flex;
    flex-direction: column;
}
.report {
    flex: 1;
    display: flex;
    background: #fff;
}
.canvas {
    flex: 1;
    display: flex;
    padding: 0 25px 6px;
    border-right: 1px solid #a19f9d;
}
.page {
    flex: 1;
    position: relative;
    border: 2px dotted #605e5c;
    border-top: none;
}
.filters {
    width: 32px;
    display: flex;
    flex-direction: column;
    align-items: center;
    padding-top: 12px;
    gap: 16px;
}
.filters span {
    writing-mode: vertical-rl;
    margin-top: -6px;
    font-size: 14px;
    font-weight: 600;
}

/* slicer */
.slicer {
    position: absolute;
    left: 440px;
    top: 138px;
    width: 592px;
    height: 425px;
    padding: 6px 14px;
    border: 1px solid #c8c6c4;
}
.slicer-tools {
    position: absolute;
    right: 4px;
    top: -21px;
    display: flex;
    align-items: center;
    gap: 12px;
}
.handle {
    position: absolute;
    border: 0 solid #979593;
}
.tl, .tr, .bl, .br {
    width: 9px;
    height: 9px;
}
.tl { left: -2px; top: -2px; border-width: 3px 0 0 3px; }
.tr { right: -2px; top: -2px; border-width: 3px 3px 0 0; }
.bl { left: -2px; bottom: -2px; border-width: 0 0 3px 3px; }
.br { right: -2px; bottom: -2px; border-width: 0 3px 3px 0; }
.t, .bm {
    left: 289px;
    width: 12px;
    border-top-width: 4px;
}
.t { top: -2px; }
.bm { bottom: -2px; }
.l, .r {
    top: 206px;
    height: 12px;
    border-left-width: 4px;
}
.l { left: -2px; }
.r { right: -2px; }
.slicer h3 {
    font-family: "DIN", Roboto, sans-serif;
    font-size: 16px;
    font-weight: 500;
}
.slicer ul {
    list-style: none;
    margin-top: 4px;
}
.slicer li {
    display: flex;
    align-items: center;
    height: 32px;
    font-size: 17px;
    line-height: 24px;
}
.exp {
    width: 26px;
}
.slicer input {
    appearance: none;
    width: 18px;
    height: 18px;
    margin: 0 9px 0 0;
    border: 1px solid #797775;
    background: #fff;
}
.slicer input:checked {
    background: #212121;
    border-color: #212121;
}
.slicer .partial {
    background: #767676;
    border: 1px solid #797775;
    box-shadow: inset 0 0 0 4px #fff;
}

/* page tabs */
.pages {
    display: flex;
    height: 35px;
}
.view-btn {
    width: 24px;
    margin-left: 10px;
    padding: 0 2px 4px;
    border-bottom: 3px solid transparent;
    height: 31px;
}
.view-btn + .view-btn {
    margin: 0 15px 0 20px;
}
.view-btn.on {
    border-bottom-color: #117865;
}
.nav-btn {
    width: 5px;
    margin-right: 17px;
}
.nav-btn + .nav-btn {
    margin-right: 7px;
}
.page-tab {
    width: 77px;
    border-left: 1px solid #979593;
    border-right: 1px solid #979593;
    box-shadow: inset 0 -4px #117865;
    background: #fff;
    font-size: 12px;
    font-weight: 600;
}
.page-add {
    display: flex;
    align-items: center;
    justify-content: center;
    width: 39px;
    background: #117865;
}

/* side panels */
.panel {
    border-left: 1px solid #e1dfdd;
}
.viz {
    width: 181px;
}
.data {
    width: 180px;
}
.panel-head {
    display: flex;
    align-items: center;
    justify-content: space-between;
    height: 38px;
    padding: 0 7px 0 8px;
}
.panel-head h2 {
    font-size: 15px;
    font-weight: 600;
}
.viz h4 {
    padding-left: 8px;
    font-size: 11px;
    font-weight: 600;
}
.modes {
    display: flex;
    justify-content: space-between;
    padding: 3px 8px 0;
}
.mode {
    width: 32px;
    height: 32px;
}
.mode.sel {
    background: #d2d0ce;
}
.notch {
    margin-top: 4px;
    width: 100%;
}
.gallery {
    display: grid;
    grid-template-columns: repeat(6, 24px);
    gap: 4px;
    padding: 8px 8px 0;
}
.gallery button {
    display: flex;
    align-items: center;
    justify-content: center;
    height: 24px;
}
.gallery svg {
    width: 18px;
    height: 18px;
}
.gallery .picked {
    border: 1px solid #252423;
}
.gallery .script {
    font-size: 16px;
    font-weight: 700;
    color: #1b86cc;
}
.more {
    margin: 12px 0 18px 12px;
    display: block;
}
.fields {
    border-top: 1px solid #d2d0ce;
    padding: 9px 6px 0 4px;
    font-size: 11px;
}
.label {
    padding-left: 8px;
    margin-bottom: 5px;
}
.label.strong {
    margin: 11px 0 3px;
    font-weight: 600;
    color: #484644;
}
.well {
    padding: 3px 2px 6px;
    border: 1px dashed #c8c6c4;
    background: #fff;
}
.pill {
    padding-bottom: 1px;
    margin-bottom: 2px;
    border: 1px solid #c8c6c4;
    border-radius: 2px;
    background: #edebe9;
}
.pill-row {
    display: flex;
    align-items: center;
    height: 20px;
    padding: 2px 4px 0;
}
.pill-row span {
    flex: 1;
}
.pill-row.sub {
    height: 19px;
    padding-left: 12px;
}
.dn {
    width: 8px;
    height: 8px;
    margin: 0 8px 5px 0;
    border: solid #605e5c;
    border-width: 0 1px 1px 0;
    transform: rotate(45deg);
}
.x {
    width: 9px;
    height: 9px;
    background:
        linear-gradient(45deg, transparent 46%, #484644 46%, #484644 54%, transparent 54%),
        linear-gradient(-45deg, transparent 46%, #484644 46%, #484644 54%, transparent 54%);
}
.toggle-row {
    display: flex;
    align-items: center;
    justify-content: space-between;
    position: relative;
    height: 27px;
    padding: 0 16px 0 8px;
}
.toggle-row input {
    position: absolute;
    right: 16px;
    opacity: 0;
}
.toggle {
    display: flex;
    align-items: center;
    justify-content: space-between;
    width: 32px;
    height: 16px;
    padding: 0 3px 0 4px;
    border: 1px solid #8a8886;
    border-radius: 8px;
    background: #fff;
    font-size: 9px;
}
.toggle::before {
    content: "";
    width: 8px;
    height: 8px;
    border-radius: 50%;
    background: #605e5c;
}
.toggle-row input:checked + .toggle {
    flex-direction: row-reverse;
    border-color: #117865;
    background: #117865;
    color: #fff;
}
.toggle-row input:checked + .toggle::before {
    background: #fff;
}
.drop {
    margin-top: 5px;
    padding: 4px 8px;
    border: 1px dashed #c8c6c4;
    background: #fff;
    white-space: nowrap;
}
.search {
    display: flex;
    align-items: center;
    gap: 7px;
    height: 24px;
    margin: 7px 3px 0 4px;
    padding-left: 12px;
    border: 1px solid #d2d0ce;
    border-bottom-color: #605e5c;
    border-radius: 4px;
    background: #fff;
}
.search input {
    width: 100%;
    border: none;
    padding: 0;
    background: none;
    font: inherit;
    font-size: 13px;
    outline: none;
}
.search input::placeholder {
    color: #605e5c;
}
.tree {
    display: flex;
    align-items: center;
    margin: 13px 0 0 15px;
    white-space: nowrap;
    font-size: 11px;
}
.tree svg + svg {
    margin-left: 7px;
}

/* status bar */
.status {
    flex: none;
    display: flex;
    justify-content: space-between;
    align-items: center;
    height: 23px;
    padding: 2px 17px 0 4px;
    border-top: 1px solid #e1dfdd;
    color: #484644;
}
.zoom {
    display: flex;
    align-items: center;
}
.zoom input {
    appearance: none;
    width: 100px;
    height: 12px;
    margin: 0 5px;
    background: linear-gradient(#605e5c, #605e5c) center / 100% 1px no-repeat;
}
.zoom input::-webkit-slider-thumb {
    appearance: none;
    width: 4px;
    height: 12px;
    background: #484644;
}
.zoom span {
    margin: 0 12px 0 14px;
}
```
